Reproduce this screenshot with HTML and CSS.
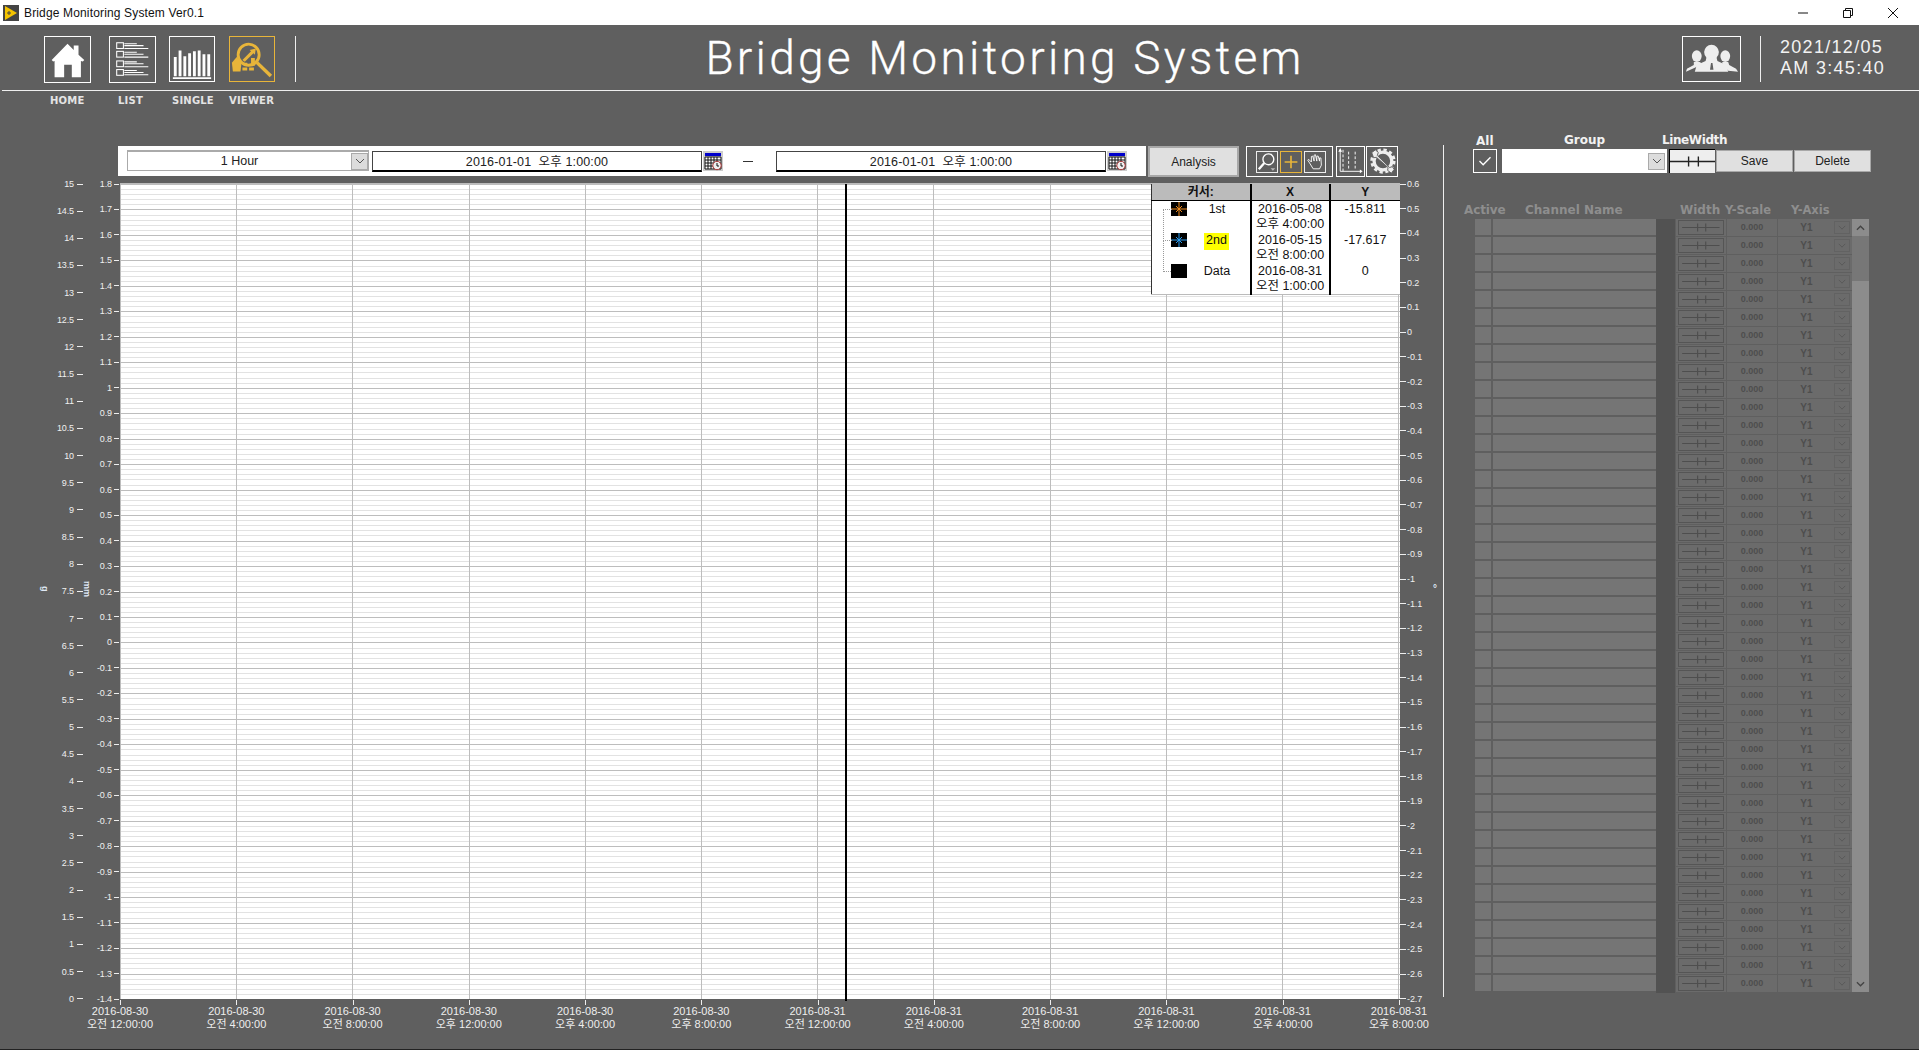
FILE: index.html
```html
<!DOCTYPE html>
<html lang="ko">
<head>
<meta charset="utf-8">
<title>Bridge Monitoring System Ver0.1</title>
<link rel="stylesheet" href="styles.css">
</head>
<body>
<svg class="defs" width="0" height="0" aria-hidden="true">
  <symbol id="lw" viewBox="0 0 46 16"><path d="M0 8h46M19 3v10M29 3v10" fill="none" stroke="currentColor" stroke-width="1.4"/></symbol>
  <symbol id="chev" viewBox="0 0 10 6"><path d="M1 1l4 4 4-4" fill="none" stroke="currentColor" stroke-width="1"/></symbol>
  <symbol id="cal" viewBox="0 0 20 20"><rect width="20" height="20" fill="#ccc"/><rect x="2" y="2" width="16" height="3" fill="#00c"/><path d="M2 6h16v12H2z" fill="#fff"/><path d="M2 6h16M2 9h16M2 12h16M2 15h16M2 18h16M2 6v12M5 6v12M8 6v12M11 6v12M14 6v12M18 6v12" stroke="#111" stroke-width="1" fill="none"/><circle cx="14" cy="14.5" r="4.2" fill="#eee" stroke="#a33"/><path d="M14 12v3h2" stroke="#111" fill="none"/></symbol>
</svg>

<header class="titlebar">
  <svg class="app-icon" viewBox="0 0 16 16"><rect width="16" height="16" fill="#444"/><path d="M2 1l12 7-12 7z" fill="#f5c400"/><path d="M4 8h4M6 6v4" stroke="#444"/></svg>
  <span class="app-title">Bridge Monitoring System Ver0.1</span>
  <div class="win-controls">
    <svg viewBox="0 0 12 12"><path d="M1 6h10" stroke="#111"/></svg>
    <svg viewBox="0 0 12 12"><path d="M1.5 3.5h7v7h-7zM3.5 3.5v-2h7v7h-2" fill="none" stroke="#111"/></svg>
    <svg viewBox="0 0 12 12"><path d="M1 1l10 10M11 1L1 11" stroke="#111"/></svg>
  </div>
</header>

<section class="topbar">
  <nav class="nav-icons">
    <a class="nav-btn"><svg viewBox="0 0 47 47"><path d="M7 24L23.500 7 30 13.500V9h5v9.500L41 24l-1.500 1.500-2 -.5v17H28V29h-8v13H10V25l-1.500.5z" fill="#fff"/></svg></a>
    <a class="nav-btn gap-l"><svg viewBox="0 0 47 47"><g fill="none" stroke="#fff" stroke-width="1.100"><rect x="7" y="6" width="7" height="6"/><rect x="7" y="15" width="7" height="6"/><rect x="7" y="25" width="7" height="6"/><rect x="7" y="34" width="7" height="6"/><path d="M15 7h13M15 9h20M15 12h25M15 16h13M15 18h20M15 21h25M15 26h13M15 28h20M15 31h25M15 35h13M15 37h20M15 39.500h25"/></g></svg></a>
    <a class="nav-btn narrow"><svg viewBox="0 0 46 46"><path d="M4 21h3v20H4zM9 14h3v27H9zM14 20h3v21h-3zM19 17h3v24h-3zM24 15h3v26h-3zM29 14h3v27h-3zM34 18h3v23h-3zM39 18h3v23h-3z" fill="#fff"/><path d="M3 42h40v2H3z" fill="#fff"/></svg></a>
    <a class="nav-btn narrow active"><svg viewBox="0 0 46 46" fill="#e8b53a"><circle cx="19.500" cy="18.500" r="11" fill="none" stroke="#e8b53a" stroke-width="3"/><path d="M27 28l2.500-2.500L44 39.500 41.500 42z"/><path d="M2 27l5-6 5 6-1 9H3z"/><path d="M13 24l9-9 -1.500-1.500L27 12l-1 6.500-1.500-1.500-9 9z"/><path d="M13 32h5v3h-5zM20 32h5v3h-5zM22 22h4v8h-4zM15 27h3v3h-3z"/></svg></a>
    <span class="nav-sep"></span>
  </nav>
  <h1 class="app-heading">Bridge Monitoring System</h1>
  <div class="top-right">
    <a class="user-btn"><svg viewBox="0 0 58 44" fill="#eee"><circle cx="29" cy="15" r="7.500"/><path d="M24 20h10l1 4 9 4 2 7H12l2-7 9-4z"/><ellipse cx="14" cy="19" rx="5" ry="6"/><ellipse cx="43" cy="19" rx="5" ry="6"/><path d="M11 25h6l3 2-8 4-9 4 1-3 7-4zM40 25h6l1 3 7 4 2 3-10-1-6-7z"/><path d="M28.500 26h1.500l1 7h-3.500z" fill="#5f5f5f"/></svg></a>
    <span class="nav-sep"></span>
    <div class="clock">2021/12/05<br>AM 3:45:40</div>
  </div>
</section>

<div class="nav-labels"><span>HOME</span><span>LIST</span><span>SINGLE</span><span>VIEWER</span></div>

<main class="main">
  <section class="chart-area">
    <div class="toolbar">
      <div class="time-panel">
        <div class="combo"><span>1 Hour</span><b class="arrow"><svg><use href="#chev"/></svg></b></div>
        <div class="date"><span>2016-01-01&nbsp; 오후 1:00:00</span></div>
        <svg class="cal"><use href="#cal"/></svg>
        <span class="dash"></span>
        <div class="date"><span>2016-01-01&nbsp; 오후 1:00:00</span></div>
        <svg class="cal"><use href="#cal"/></svg>
      </div>
      <button class="btn analysis">Analysis</button>
      <div class="tool-box tb1">
        <svg class="tool" viewBox="0 0 22 22"><circle cx="12.500" cy="8" r="6" fill="none" stroke="#fff" stroke-width="1.500"/><path d="M8 12l-6 7" stroke="#fff" stroke-width="2.500"/><path d="M15 18h5l-2.500 2.500z" fill="#bbb"/></svg>
        <svg class="tool on" viewBox="0 0 22 22"><path d="M11 4v14M4 11h14" stroke="#e8b53a" stroke-width="1.800"/></svg>
        <svg class="tool" viewBox="0 0 22 22"><path d="M5 12L3 9l1-1 3 3V5l1.500-.5L10 10V3.500l1.500-.5L13 10V4.500h1.500L16 10V6.500h1.500l.5 8-2 4H9z" fill="none" stroke="#fff"/></svg>
      </div>
      <div class="tool-box tb2"><svg viewBox="0 0 28 31"><path d="M3 3v23h22" fill="none" stroke="#fff"/><path d="M6 3v23M12 5v18M19 5v18" fill="none" stroke="#fff" stroke-dasharray="3 2"/><path d="M3 1L1 5h4zM27 26l-3-2v4z" fill="#fff"/></svg></div>
      <div class="tool-box tb3"><svg viewBox="0 0 32 31"><circle cx="17" cy="15" r="9.500" fill="none" stroke="#eee" stroke-width="3.500"/><circle cx="17" cy="15" r="12" fill="none" stroke="#eee" stroke-width="3" stroke-dasharray="3.500 2.800"/><path d="M5 6l4-3 3 3-1 3 13 13 3-1 2 3-3 4-4-3 .5-3L10 11l-3 .5z" fill="#eee" stroke="#5f5f5f"/></svg></div>
    </div>

    <div class="chart">
      <div class="unit unit-g">g</div>
      <div class="axis ax-left">
        <span>15</span><span>14.5</span><span>14</span><span>13.5</span><span>13</span><span>12.5</span><span>12</span><span>11.5</span><span>11</span><span>10.5</span><span>10</span><span>9.5</span><span>9</span><span>8.5</span><span>8</span><span>7.5</span><span>7</span><span>6.5</span><span>6</span><span>5.5</span><span>5</span><span>4.5</span><span>4</span><span>3.5</span><span>3</span><span>2.5</span><span>2</span><span>1.5</span><span>1</span><span>0.5</span><span>0</span>
      </div>
      <div class="unit unit-mm">mm</div>
      <div class="axis ax-mid">
        <span>1.8</span><span>1.7</span><span>1.6</span><span>1.5</span><span>1.4</span><span>1.3</span><span>1.2</span><span>1.1</span><span>1</span><span>0.9</span><span>0.8</span><span>0.7</span><span>0.6</span><span>0.5</span><span>0.4</span><span>0.3</span><span>0.2</span><span>0.1</span><span>0</span><span>-0.1</span><span>-0.2</span><span>-0.3</span><span>-0.4</span><span>-0.5</span><span>-0.6</span><span>-0.7</span><span>-0.8</span><span>-0.9</span><span>-1</span><span>-1.1</span><span>-1.2</span><span>-1.3</span><span>-1.4</span>
      </div>
      <div class="plot">
        <i class="cursor"></i>
        <table class="legend">
          <thead><tr><th>커서:</th><th>X</th><th>Y</th></tr></thead>
          <tbody>
            <tr><td class="name"><svg class="swatch" viewBox="0 0 16 14"><rect width="16" height="14"/><path d="M0 7h16M8 0v14M5 4l6 6M11 4l-6 6" stroke="#f08a1c" fill="none"/></svg><span>1st</span></td><td>2016-05-08<br>오후 4:00:00</td><td class="val">-15.811</td></tr>
            <tr><td class="name"><svg class="swatch" viewBox="0 0 16 14"><rect width="16" height="14"/><path d="M0 7h16M8 0v14M5 4l6 6M11 4l-6 6" stroke="#2a9cf0" fill="none"/></svg><span class="hl">2nd</span></td><td>2016-05-15<br>오전 8:00:00</td><td class="val">-17.617</td></tr>
            <tr><td class="name"><svg class="swatch" viewBox="0 0 16 14"><rect width="16" height="14"/></svg><span>Data</span></td><td>2016-08-31<br>오전 1:00:00</td><td class="val">0</td></tr>
          </tbody>
        </table>
      </div>
      <div class="axis ax-right">
        <span>0.6</span><span>0.5</span><span>0.4</span><span>0.3</span><span>0.2</span><span>0.1</span><span>0</span><span>-0.1</span><span>-0.2</span><span>-0.3</span><span>-0.4</span><span>-0.5</span><span>-0.6</span><span>-0.7</span><span>-0.8</span><span>-0.9</span><span>-1</span><span>-1.1</span><span>-1.2</span><span>-1.3</span><span>-1.4</span><span>-1.5</span><span>-1.6</span><span>-1.7</span><span>-1.8</span><span>-1.9</span><span>-2</span><span>-2.1</span><span>-2.2</span><span>-2.3</span><span>-2.4</span><span>-2.5</span><span>-2.6</span><span>-2.7</span>
      </div>
      <div class="unit unit-deg">°</div>
      <div class="xaxis">
        <span>2016-08-30<br>오전 12:00:00</span><span>2016-08-30<br>오전 4:00:00</span><span>2016-08-30<br>오전 8:00:00</span><span>2016-08-30<br>오후 12:00:00</span><span>2016-08-30<br>오후 4:00:00</span><span>2016-08-30<br>오후 8:00:00</span><span>2016-08-31<br>오전 12:00:00</span><span>2016-08-31<br>오전 4:00:00</span><span>2016-08-31<br>오전 8:00:00</span><span>2016-08-31<br>오후 12:00:00</span><span>2016-08-31<br>오후 4:00:00</span><span>2016-08-31<br>오후 8:00:00</span>
      </div>
    </div>
  </section>

  <aside class="side">
    <div class="side-labels"><span class="l-all">All</span><span class="l-group">Group</span><span class="l-lw">LineWidth</span></div>
    <div class="side-controls">
      <span class="check"><svg viewBox="0 0 24 24"><path d="M6 12l4 4 8-8" fill="none" stroke="#fff" stroke-width="1.500"/></svg></span>
      <div class="group-combo"><b class="arrow"><svg><use href="#chev"/></svg></b></div>
      <div class="lw-box"><svg><use href="#lw"/></svg></div>
      <button class="btn small">Save</button>
      <button class="btn small">Delete</button>
    </div>
    <div class="col-heads"><span class="h-active">Active</span><span class="h-name">Channel Name</span><span class="h-width">Width</span><span class="h-scale">Y-Scale</span><span class="h-axis">Y-Axis</span></div>
    <div class="table-wrap">
      <div class="rows">
        <div class="row"><b></b><b></b><s></s><u><svg><use href="#lw"/></svg></u><em>0.000</em><q>Y1<svg><use href="#chev"/></svg></q></div>
        <div class="row"><b></b><b></b><s></s><u><svg><use href="#lw"/></svg></u><em>0.000</em><q>Y1<svg><use href="#chev"/></svg></q></div>
        <div class="row"><b></b><b></b><s></s><u><svg><use href="#lw"/></svg></u><em>0.000</em><q>Y1<svg><use href="#chev"/></svg></q></div>
        <div class="row"><b></b><b></b><s></s><u><svg><use href="#lw"/></svg></u><em>0.000</em><q>Y1<svg><use href="#chev"/></svg></q></div>
        <div class="row"><b></b><b></b><s></s><u><svg><use href="#lw"/></svg></u><em>0.000</em><q>Y1<svg><use href="#chev"/></svg></q></div>
        <div class="row"><b></b><b></b><s></s><u><svg><use href="#lw"/></svg></u><em>0.000</em><q>Y1<svg><use href="#chev"/></svg></q></div>
        <div class="row"><b></b><b></b><s></s><u><svg><use href="#lw"/></svg></u><em>0.000</em><q>Y1<svg><use href="#chev"/></svg></q></div>
        <div class="row"><b></b><b></b><s></s><u><svg><use href="#lw"/></svg></u><em>0.000</em><q>Y1<svg><use href="#chev"/></svg></q></div>
        <div class="row"><b></b><b></b><s></s><u><svg><use href="#lw"/></svg></u><em>0.000</em><q>Y1<svg><use href="#chev"/></svg></q></div>
        <div class="row"><b></b><b></b><s></s><u><svg><use href="#lw"/></svg></u><em>0.000</em><q>Y1<svg><use href="#chev"/></svg></q></div>
        <div class="row"><b></b><b></b><s></s><u><svg><use href="#lw"/></svg></u><em>0.000</em><q>Y1<svg><use href="#chev"/></svg></q></div>
        <div class="row"><b></b><b></b><s></s><u><svg><use href="#lw"/></svg></u><em>0.000</em><q>Y1<svg><use href="#chev"/></svg></q></div>
        <div class="row"><b></b><b></b><s></s><u><svg><use href="#lw"/></svg></u><em>0.000</em><q>Y1<svg><use href="#chev"/></svg></q></div>
        <div class="row"><b></b><b></b><s></s><u><svg><use href="#lw"/></svg></u><em>0.000</em><q>Y1<svg><use href="#chev"/></svg></q></div>
        <div class="row"><b></b><b></b><s></s><u><svg><use href="#lw"/></svg></u><em>0.000</em><q>Y1<svg><use href="#chev"/></svg></q></div>
        <div class="row"><b></b><b></b><s></s><u><svg><use href="#lw"/></svg></u><em>0.000</em><q>Y1<svg><use href="#chev"/></svg></q></div>
        <div class="row"><b></b><b></b><s></s><u><svg><use href="#lw"/></svg></u><em>0.000</em><q>Y1<svg><use href="#chev"/></svg></q></div>
        <div class="row"><b></b><b></b><s></s><u><svg><use href="#lw"/></svg></u><em>0.000</em><q>Y1<svg><use href="#chev"/></svg></q></div>
        <div class="row"><b></b><b></b><s></s><u><svg><use href="#lw"/></svg></u><em>0.000</em><q>Y1<svg><use href="#chev"/></svg></q></div>
        <div class="row"><b></b><b></b><s></s><u><svg><use href="#lw"/></svg></u><em>0.000</em><q>Y1<svg><use href="#chev"/></svg></q></div>
        <div class="row"><b></b><b></b><s></s><u><svg><use href="#lw"/></svg></u><em>0.000</em><q>Y1<svg><use href="#chev"/></svg></q></div>
        <div class="row"><b></b><b></b><s></s><u><svg><use href="#lw"/></svg></u><em>0.000</em><q>Y1<svg><use href="#chev"/></svg></q></div>
        <div class="row"><b></b><b></b><s></s><u><svg><use href="#lw"/></svg></u><em>0.000</em><q>Y1<svg><use href="#chev"/></svg></q></div>
        <div class="row"><b></b><b></b><s></s><u><svg><use href="#lw"/></svg></u><em>0.000</em><q>Y1<svg><use href="#chev"/></svg></q></div>
        <div class="row"><b></b><b></b><s></s><u><svg><use href="#lw"/></svg></u><em>0.000</em><q>Y1<svg><use href="#chev"/></svg></q></div>
        <div class="row"><b></b><b></b><s></s><u><svg><use href="#lw"/></svg></u><em>0.000</em><q>Y1<svg><use href="#chev"/></svg></q></div>
        <div class="row"><b></b><b></b><s></s><u><svg><use href="#lw"/></svg></u><em>0.000</em><q>Y1<svg><use href="#chev"/></svg></q></div>
        <div class="row"><b></b><b></b><s></s><u><svg><use href="#lw"/></svg></u><em>0.000</em><q>Y1<svg><use href="#chev"/></svg></q></div>
        <div class="row"><b></b><b></b><s></s><u><svg><use href="#lw"/></svg></u><em>0.000</em><q>Y1<svg><use href="#chev"/></svg></q></div>
        <div class="row"><b></b><b></b><s></s><u><svg><use href="#lw"/></svg></u><em>0.000</em><q>Y1<svg><use href="#chev"/></svg></q></div>
        <div class="row"><b></b><b></b><s></s><u><svg><use href="#lw"/></svg></u><em>0.000</em><q>Y1<svg><use href="#chev"/></svg></q></div>
        <div class="row"><b></b><b></b><s></s><u><svg><use href="#lw"/></svg></u><em>0.000</em><q>Y1<svg><use href="#chev"/></svg></q></div>
        <div class="row"><b></b><b></b><s></s><u><svg><use href="#lw"/></svg></u><em>0.000</em><q>Y1<svg><use href="#chev"/></svg></q></div>
        <div class="row"><b></b><b></b><s></s><u><svg><use href="#lw"/></svg></u><em>0.000</em><q>Y1<svg><use href="#chev"/></svg></q></div>
        <div class="row"><b></b><b></b><s></s><u><svg><use href="#lw"/></svg></u><em>0.000</em><q>Y1<svg><use href="#chev"/></svg></q></div>
        <div class="row"><b></b><b></b><s></s><u><svg><use href="#lw"/></svg></u><em>0.000</em><q>Y1<svg><use href="#chev"/></svg></q></div>
        <div class="row"><b></b><b></b><s></s><u><svg><use href="#lw"/></svg></u><em>0.000</em><q>Y1<svg><use href="#chev"/></svg></q></div>
        <div class="row"><b></b><b></b><s></s><u><svg><use href="#lw"/></svg></u><em>0.000</em><q>Y1<svg><use href="#chev"/></svg></q></div>
        <div class="row"><b></b><b></b><s></s><u><svg><use href="#lw"/></svg></u><em>0.000</em><q>Y1<svg><use href="#chev"/></svg></q></div>
        <div class="row"><b></b><b></b><s></s><u><svg><use href="#lw"/></svg></u><em>0.000</em><q>Y1<svg><use href="#chev"/></svg></q></div>
        <div class="row"><b></b><b></b><s></s><u><svg><use href="#lw"/></svg></u><em>0.000</em><q>Y1<svg><use href="#chev"/></svg></q></div>
        <div class="row"><b></b><b></b><s></s><u><svg><use href="#lw"/></svg></u><em>0.000</em><q>Y1<svg><use href="#chev"/></svg></q></div>
        <div class="row"><b></b><b></b><s></s><u><svg><use href="#lw"/></svg></u><em>0.000</em><q>Y1<svg><use href="#chev"/></svg></q></div>
      </div>
      <div class="scroll">
        <svg class="sc-up" viewBox="0 0 10 6"><path d="M1 5l4-4 4 4" fill="none" stroke="#444" stroke-width="1.500"/></svg>
        <i class="thumb"></i>
        <svg class="sc-down" viewBox="0 0 10 6"><path d="M1 1l4 4 4-4" fill="none" stroke="#444" stroke-width="1.500"/></svg>
      </div>
    </div>
  </aside>
</main>
<div class="bottom-edge"></div>
</body>
</html>
```
FILE: styles.css
```css
* { box-sizing: border-box; }
html, body { margin: 0; height: 100%; }
body {
  width: 1919px; height: 1051px; overflow: hidden;
  background: #5f5f5f; color: #fff;
  font-family: "Liberation Sans", "Noto Sans CJK KR", sans-serif;
  display: flex; flex-direction: column;
}
.defs { position: absolute; }

.titlebar { height: 25px; background: #fff; color: #111; display: flex; align-items: center; flex: none; padding-left: 3px; }
.app-icon { width: 16px; height: 16px; margin-right: 5px; }
.app-title { font-size: 12px; letter-spacing: .15px; }
.win-controls { margin-left: auto; display: flex; gap: 33px; padding-right: 20px; }
.win-controls svg { width: 12px; height: 12px; }

.topbar { height: 66px; flex: none; margin-left: 2px; border-bottom: 1px solid #eee; display: grid; grid-template-columns: 693px 620px 1fr; }
.nav-icons { display: flex; align-items: flex-start; padding: 11px 0 0 42px; }
.nav-btn { width: 47px; height: 47px; border: 1px solid #fff; display: block; margin-right: 18px; flex: none; }
.nav-btn.gap-l { margin-right: 13px; }
.nav-btn.narrow { width: 46px; height: 46px; margin-right: 14px; }
.nav-btn.active { border-color: #e8b53a; margin-right: 20px; }
.nav-btn svg, .user-btn svg { display: block; width: 100%; height: 100%; }
.nav-sep { width: 1px; height: 46px; background: #eee; display: block; flex: none; }
.app-heading { margin: 0; text-align: center; font: 300 46px/52px Roboto, sans-serif; letter-spacing: 3.250px; white-space: nowrap; padding-top: 7px; -webkit-text-stroke: .3px #fff; }
.top-right { display: flex; justify-content: flex-end; align-items: flex-start; padding-top: 11px; }
.user-btn { width: 59px; height: 46px; border: 1px solid #fff; margin-right: 19px; }
.clock { font: 18px/21px "Liberation Sans", sans-serif; letter-spacing: 1.300px; margin-left: 19px; width: 139px; padding-top: 1px; color: #f2f2f2; }

.nav-labels { flex: none; height: 55px; display: flex; padding: 3px 0 0 50px; font: bold 10px/13px "DejaVu Sans", sans-serif; color: #e4e4e4; letter-spacing: .2px; }
.nav-labels span:nth-child(1) { width: 68px; }
.nav-labels span:nth-child(2) { width: 54px; }
.nav-labels span:nth-child(3) { width: 57px; }

.main { flex: 1; display: flex; min-height: 0; }
.chart-area { width: 1443px; flex: none; display: flex; flex-direction: column; }

.toolbar { display: flex; height: 31px; margin-left: 118px; flex: none; }
.time-panel { width: 1028px; height: 30px; background: #fff; display: flex; align-items: center; padding-left: 9px; color: #222; font-size: 12.500px; }
.combo { width: 242px; height: 21px; border: 1px solid #aaa; border-width: 2px 1px 1px 1px; display: flex; align-items: center; position: relative; margin-top: -1px; }
.combo > span { width: 224px; text-align: center; }
.arrow { width: 17px; height: 17px; background: #dcdcdc; border: 1px solid #aaa; color: #555; display: flex; align-items: center; justify-content: center; }
.arrow svg { width: 10px; height: 6px; display: block; }
.date { width: 330px; height: 21px; margin-left: 3px; border: 1px solid #444; border-bottom: 2px solid #000; text-align: center; line-height: 20px; letter-spacing: .15px; }
.cal { width: 20px; height: 20px; margin-left: 1px; flex: none; }
.dash { width: 10px; height: 1px; background: #333; margin: 0 20px 0 20px; flex: none; }
.btn { background: #e0e0e0; border: 1px solid #a8a8a8; color: #222; padding: 0; font: 12px "Liberation Sans", sans-serif; }
.analysis { width: 91px; height: 31px; margin-left: 2px; border-width: 2px; padding-top: 1px; }
.tool-box { border: 1px solid #fff; height: 31px; flex: none; display: flex; align-items: center; }
.tool-box > svg { display: block; }
.tb1 { width: 87px; margin-left: 7px; padding-left: 9px; gap: 2px; }
.tb2 { width: 29px; margin-left: 3px; }
.tb2 svg, .tb3 svg { width: 100%; height: 100%; }
.tb3 { width: 32px; margin-left: 1px; }
.tool { width: 22px; height: 22px; border: 1px solid #eee; flex: none; }
.tool.on { border-color: #e8b53a; }

.chart { margin-top: 6px; display: grid; grid-template-columns: 43px 40px 28px 9px 1280px 33px 10px; grid-template-rows: 816px 1fr; position: relative; }
.unit { font: bold 9px/10px "Liberation Sans", sans-serif; align-self: center; color: #dfe8f5; }
.unit-g { grid-column: 1; grid-row: 1; writing-mode: vertical-rl; justify-self: end; margin-right: -7px; margin-top: -4px; }
.unit-mm { grid-column: 3; grid-row: 1; writing-mode: vertical-rl; justify-self: start; margin-top: -4px; margin-left: -1px; }
.unit-deg { grid-column: 7; grid-row: 1; font-size: 10px; margin-top: -4px; }
.axis { display: flex; flex-direction: column; justify-content: space-between; margin: -5px 0 -6px; font-size: 9px; line-height: 12px; color: #f0f0f0; letter-spacing: -.1px; }
.axis span { height: 12px; display: flex; align-items: center; white-space: nowrap; }
.ax-left { grid-column: 2; grid-row: 1; text-align: right; }
.ax-left span { justify-content: flex-end; gap: 3px; }
.ax-left span::after { content: ""; width: 6px; height: 1px; background: #eee; }
.ax-mid { grid-column: 3 / 5; grid-row: 1; }
.ax-mid span { justify-content: flex-end; gap: 2px; padding-right: 1px; }
.ax-mid span::after { content: ""; width: 5px; height: 1px; background: #eee; }
.ax-right { grid-column: 6; grid-row: 1; }
.ax-right span { gap: 1px; }
.ax-right span::before { content: ""; width: 6px; height: 1px; background: #eee; }

.plot {
  grid-column: 5; grid-row: 1; position: relative; background-color: #fff;
  border-top: 1px solid #bbb;
  background-image:
    repeating-linear-gradient(90deg, #bdbdbd 0 1px, transparent 1px 116.200px),
    repeating-linear-gradient(180deg, #bdbdbd 0 1px, transparent 1px 25.470px),
    repeating-linear-gradient(180deg, #e2e2e2 0 1px, transparent 1px 5.094px);
}
.cursor { position: absolute; left: 725px; top: 0; bottom: 0; width: 2px; background: #000; }
.cursor::after { content: ""; position: absolute; bottom: -2px; left: 0; width: 2px; height: 2px; background: #000; }
.legend {
  position: absolute; top: 0; right: 0; width: 249px; height: 108px; background: #fff; color: #111;
  border-collapse: collapse; table-layout: fixed; font-size: 12.500px; line-height: 15px;
  border-left: 1px solid #333; border-bottom: 1px solid #bbb;
}
.legend th { height: 16px; background: #bbb; font-weight: bold; font-size: 12px; line-height: 14px; padding: 0; border-left: 2px solid #000; border-bottom: 1px solid #000; }
.legend th:first-child, .legend td:first-child { border-left: 0; }
.legend th:nth-child(1) { width: 99px; }
.legend th:nth-child(2) { width: 79px; }
.legend td { padding: 1px 0 0; vertical-align: top; border-left: 2px solid #000; text-align: center; height: 30px; white-space: nowrap; }
.legend td.name { position: relative; text-align: left; padding: 1px 0 0 19px; }
.legend td.name::before { content: ""; position: absolute; left: 11px; top: 8px; width: 8px; height: 31px; border-left: 1px dotted #999; border-top: 1px dotted #999; }
.legend tr:last-child td.name::before { height: 0; border-left: 0; }
.swatch { width: 16px; height: 14px; display: inline-block; vertical-align: top; }
.legend td.name span { position: absolute; left: 41px; width: 48px; text-align: center; top: 1px; }
.legend td.name span.hl { left: 52px; width: 25px; height: 17px; background: #ff0; }

.xaxis { grid-column: 5; grid-row: 2; width: 1279px; display: flex; justify-content: space-between; font-size: 11px; line-height: 13px; color: #eee; text-align: center; }
.xaxis span { width: 0; display: flex; flex-direction: column; align-items: center; white-space: nowrap; padding-top: 6px; position: relative; }
.xaxis span::before { content: ""; position: absolute; top: 1px; left: 0; width: 1px; height: 5px; background: #eee; }

.side { flex: 1; border-left: 1px solid #eee; height: 852px; margin-top: -1px; padding-left: 29px; position: relative; display: flex; flex-direction: column; }
.side-labels { position: relative; height: 0; }
.side-labels span { position: absolute; top: -12px; font: bold 12px/14px "DejaVu Sans", sans-serif; color: #f2f2f2; }
.l-all { left: 3px; top: -11px !important; }
.l-group { left: 91px; top: -12px !important; }
.l-lw { left: 189px; letter-spacing: -.4px; }
.side-controls { display: flex; align-items: center; margin-top: 4px; height: 24px; }
.check { width: 24px; height: 24px; border: 1px solid #fff; display: block; flex: none; }
.check svg { display: block; width: 22px; height: 22px; }
.group-combo { width: 165px; height: 24px; margin-left: 5px; background: #fff; display: flex; align-items: center; justify-content: flex-end; padding-right: 2px; flex: none; }
.lw-box { width: 46px; height: 24px; margin-left: 2px; background: #eee; border-left: 1px solid #000; border-top: 1px solid #000; color: #222; flex: none; }
.lw-box svg { width: 100%; height: 100%; display: block; }
.small { width: 77px; height: 22px; margin-left: 1px; flex: none; border-width: 1px; }
.col-heads { position: relative; height: 46px; font: bold 12px/14px "DejaVu Sans", sans-serif; color: #8e8e8e; }
.col-heads span { position: absolute; top: 30px; white-space: nowrap; }
.h-active { left: -9px; letter-spacing: -.1px; }
.h-name { left: 52px; }
.h-width { left: 207px; }
.h-scale { left: 252px; font-size: 11.500px; }
.h-axis { left: 318px; font-size: 11.500px; }
.table-wrap { display: flex; align-items: stretch; margin-left: 2px; height: 773px; }
.rows { width: 377px; display: flex; flex-direction: column; }
.row { height: 18px; display: flex; flex: none; color: #4e4e4e; font-size: 9px; }
.row > * { text-decoration: none; font-style: normal; font-weight: bold; quotes: none; }
.row b { background: #757575; height: 16px; width: 16px; margin-right: 2px; }
.row b + b { width: 164px; margin-right: 0; }
.row s { width: 19px; height: 18px; background: #525252; }
.row u { width: 50px; height: 17px; background: #6b6b6b; padding: 1px 2px; margin-left: 1px; color: #4e4e4e; }
.row u svg { display: block; width: 100%; height: 15px; border: 1px solid #555; }
.row em { width: 51px; height: 17px; background: #6b6b6b; margin-left: 1px; text-align: center; line-height: 17px; }
.row q { width: 74px; height: 17px; background: #6b6b6b; margin-left: 1px; line-height: 16px; font-size: 10px; padding-left: 22px; display: flex; justify-content: space-between; align-items: center; padding-right: 2px; }
.row q::before, .row q::after { content: none; }
.row q svg { width: 16px; height: 13px; border: 1px solid #626262; padding: 3px; color: #555; }
.scroll { width: 17px; background: #8c8c8c; display: flex; flex-direction: column; align-items: center; position: relative; }
.sc-up { width: 9px; height: 6px; margin-top: 6px; flex: none; }
.thumb { width: 100%; height: 45px; background: #777; margin-top: 5px; flex: none; }
.sc-down { width: 9px; height: 6px; margin-top: auto; margin-bottom: 5px; flex: none; }

.bottom-edge { height: 2px; background: #fff; border-top: 1px solid #222; flex: none; }
```
